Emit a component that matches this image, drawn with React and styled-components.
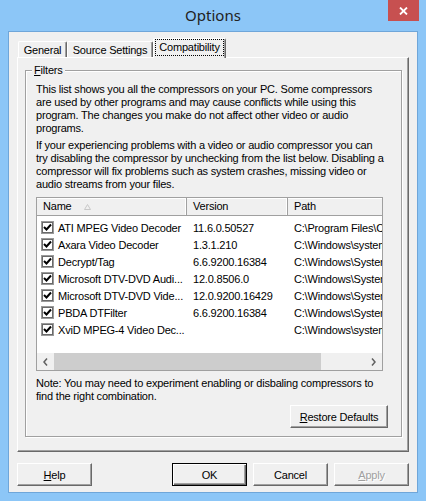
import React from 'react';
import styled, { createGlobalStyle } from 'styled-components';

const GlobalStyle = createGlobalStyle`
  html, body {
    margin: 0;
    padding: 0;
    background: #8cc6f7;
  }
  * {
    box-sizing: border-box;
  }
`;

const Window = styled.div`
  width: 426px;
  height: 501px;
  display: flex;
  flex-direction: column;
  background: #8cc6f7;
  font-family: "Liberation Sans", Arial, sans-serif;
  font-size: 11px;
  letter-spacing: -0.2px;
  color: #000;
`;

const TitleBar = styled.div`
  height: 31px;
  display: grid;
  grid-template-columns: 1fr auto 1fr;
`;

const Title = styled.div`
  grid-column: 2;
  font-family: "Noto Sans", "Open Sans", sans-serif;
  font-size: 15px;
  letter-spacing: 0;
  line-height: 30px;
  color: #222;
`;

const CloseButton = styled.div`
  justify-self: end;
  width: 31px;
  height: 21px;
  margin-right: 7px;
  background: #c75050;
  display: flex;
  align-items: center;
  justify-content: center;
`;

const Client = styled.div`
  flex: 1;
  margin: 0 8px 8px;
  background: #f0f0f0;
  border: 1px solid #6fa6d9;
  padding: 6px 8px 0;
  display: flex;
  flex-direction: column;
`;

const TabStrip = styled.div`
  display: flex;
  align-items: flex-end;
  height: 19px;
  padding-left: 1px;
`;

const Tab = styled.div`
  width: ${p => p.$w}px;
  height: ${p => (p.$active ? 20 : 16)}px;
  margin-bottom: ${p => (p.$active ? -1 : 0)}px;
  position: relative;
  z-index: ${p => (p.$active ? 1 : 0)};
  background: #f0f0f0;
  border-top: 1px solid #fff;
  border-left: 1px solid #fff;
  border-right: 1px solid #696969;
  box-shadow: inset -1px 0 #a0a0a0;
  border-radius: 2px 2px 0 0;
  display: flex;
  justify-content: center;
  align-items: ${p => (p.$active ? 'flex-start' : 'center')};
  padding-top: ${p => (p.$active ? 1 : 0)}px;
  white-space: nowrap;
`;

const FocusLabel = styled.span`
  outline: 1px dotted #000;
  outline-offset: 0;
  padding: 1px 3px;
  line-height: 13px;
`;

const Pane = styled.div`
  height: 395px;
  border-top: 1px solid #fff;
  border-left: 1px solid #fff;
  border-right: 1px solid #696969;
  border-bottom: 1px solid #696969;
  box-shadow: inset -1px -1px #a0a0a0;
  padding: 6px 6px 0 7px;
`;

const GroupBox = styled.fieldset`
  margin: 0;
  padding: 0;
  min-width: 0;
  border: 1px solid #a0a0a0;
  box-shadow: inset 1px 1px #fff, 1px 1px #fff;
`;

const Legend = styled.legend`
  margin-left: 6px;
  padding: 0 2px;
  line-height: 13px;
  background: #f0f0f0;
`;

const GroupContent = styled.div`
  display: flex;
  flex-direction: column;
  padding: 6px 13px 8px 10px;
`;

const Para = styled.p`
  margin: 0 0 ${p => p.$gap || 0}px;
  line-height: 13px;
  white-space: nowrap;
`;

const Key = styled.span`
  text-decoration: underline;
`;

const ListView = styled.div`
  width: 347px;
  height: 174px;
  margin-top: 2px;
  border: 1px solid #a0a0a0;
  background: #fff;
  display: flex;
  flex-direction: column;
  overflow: hidden;
`;

const Header = styled.div`
  display: flex;
  height: 18px;
  flex-shrink: 0;
  background: #f0f0f0;
  border-bottom: 1px solid #a0a0a0;
  box-shadow: inset 0 1px #fff;
`;

const HeaderCell = styled.div`
  width: ${p => p.$w}px;
  flex-shrink: 0;
  padding-left: 6px;
  line-height: 17px;
  border-right: 1px solid #a0a0a0;
  box-shadow: inset -1px 0 #fff;
  display: flex;
  align-items: center;
  gap: 12px;
`;

const Rows = styled.div`
  flex: 1;
  padding-top: 3px;
`;

const Row = styled.div`
  display: flex;
  height: 17px;
  align-items: center;
  white-space: nowrap;
`;

const NameCell = styled.div`
  width: 150px;
  flex-shrink: 0;
  padding-left: 4px;
  display: flex;
  align-items: center;
  gap: 4px;
`;

const Cell = styled.div`
  width: ${p => p.$w}px;
  flex-shrink: 0;
  padding-left: 6px;
`;

const CheckBox = styled.span`
  width: 13px;
  height: 13px;
  flex-shrink: 0;
  background: #fff;
  border: 1px solid #9a9a9a;
  box-shadow: inset 0 0 0 1px #6a6a6a;
  display: flex;
  align-items: center;
  justify-content: center;
`;

const ScrollBar = styled.div`
  height: 17px;
  flex-shrink: 0;
  display: flex;
  background: #f0f0f0;
`;

const ScrollArrow = styled.div`
  width: 17px;
  display: flex;
  align-items: center;
  justify-content: center;
`;

const ScrollTrack = styled.div`
  flex: 1;
  display: flex;
`;

const Thumb = styled.div`
  width: 267px;
  background: #cdcdcd;
`;

const Button = styled.div`
  width: ${p => p.$w || 75}px;
  height: 23px;
  background: #f0f0f0;
  border-top: 1px solid ${p => (p.$default ? '#000' : '#fff')};
  border-left: 1px solid ${p => (p.$default ? '#000' : '#fff')};
  border-right: 1px solid ${p => (p.$default ? '#000' : '#696969')};
  border-bottom: 1px solid ${p => (p.$default ? '#000' : '#696969')};
  box-shadow: ${p =>
    p.$default
      ? 'inset 1px 1px #fff, inset -1px -1px #696969, inset -2px -2px #a0a0a0'
      : 'inset -1px -1px #a0a0a0'};
  display: flex;
  align-items: center;
  justify-content: center;
  color: ${p => (p.$disabled ? '#a0a0a0' : '#000')};
  text-shadow: ${p => (p.$disabled ? '1px 1px #fff' : 'none')};
  white-space: nowrap;
`;

const RestoreButton = styled(Button)`
  align-self: flex-end;
  margin-top: 2px;
`;

const NotePara = styled(Para)`
  margin-top: 6px;
`;

const ButtonRow = styled.div`
  display: flex;
  gap: 6px;
  margin-top: 11px;
`;

const Spacer = styled.div`
  flex: 1;
`;

const Check = () => (
  <svg width="9" height="9" viewBox="0 0 9 9">
    <polyline points="1,4 3.5,6.5 8,1.5" fill="none" stroke="#000" strokeWidth="2" />
  </svg>
);

const compressors = [
  ['ATI MPEG Video Decoder', '11.6.0.50527', 'C:\\Program Files\\Common Files\\ATI'],
  ['Axara Video Decoder', '1.3.1.210', 'C:\\Windows\\system32\\axvd.ax'],
  ['Decrypt/Tag', '6.6.9200.16384', 'C:\\Windows\\System32\\encdec.dll'],
  ['Microsoft DTV-DVD Audi...', '12.0.8506.0', 'C:\\Windows\\System32\\msmpeg2adec.dll'],
  ['Microsoft DTV-DVD Vide...', '12.0.9200.16429', 'C:\\Windows\\System32\\msmpeg2vdec.dll'],
  ['PBDA DTFilter', '6.6.9200.16384', 'C:\\Windows\\System32\\PBDA.dll'],
  ['XviD MPEG-4 Video Dec...', '', 'C:\\Windows\\system32\\xvid.ax'],
];

const App = () => {
  return (
    <>
      <GlobalStyle />
      <Window>
        <TitleBar>
          <Title>Options</Title>
          <CloseButton>
            <svg width="9" height="8" viewBox="0 0 9 8">
              <path d="M1 0.5 L8 7.5 M8 0.5 L1 7.5" stroke="#fff" strokeWidth="1.8" />
            </svg>
          </CloseButton>
        </TitleBar>
        <Client>
          <TabStrip>
            <Tab $w={49}>General</Tab>
            <Tab $w={86}>Source Settings</Tab>
            <Tab $w={73} $active>
              <FocusLabel>Compatibility</FocusLabel>
            </Tab>
          </TabStrip>
          <Pane>
            <GroupBox>
              <Legend><Key>F</Key>ilters</Legend>
              <GroupContent>
                <Para $gap={4}>
                  This list shows you all the compressors on your PC. Some compressors<br />
                  are used by other programs and may cause conflicts while using this<br />
                  program. The changes you make do not affect other video or audio<br />
                  programs.
                </Para>
                <Para $gap={4}>
                  If your experiencing problems with a video or audio compressor you can<br />
                  try disabling the compressor by unchecking from the list below. Disabling a<br />
                  compressor will fix problems such as system crashes, missing video or<br />
                  audio streams from your files.
                </Para>
                <ListView>
                  <Header>
                    <HeaderCell $w={150}>
                      Name
                      <svg width="7" height="6" viewBox="0 0 7 6">
                        <path d="M3.5 0.5 L6.5 5.5 L0.5 5.5 Z" fill="none" stroke="#c8c8c8" />
                      </svg>
                    </HeaderCell>
                    <HeaderCell $w={101}>Version</HeaderCell>
                    <HeaderCell $w={120}>Path</HeaderCell>
                  </Header>
                  <Rows>
                    {compressors.map(([name, version, path]) => (
                      <Row key={name}>
                        <NameCell>
                          <CheckBox><Check /></CheckBox>
                          {name}
                        </NameCell>
                        <Cell $w={101}>{version}</Cell>
                        <Cell $w={200}>{path}</Cell>
                      </Row>
                    ))}
                  </Rows>
                  <ScrollBar>
                    <ScrollArrow>
                      <svg width="5" height="8" viewBox="0 0 5 8">
                        <path d="M4 0.5 L1 4 L4 7.5" fill="none" stroke="#606060" strokeWidth="1.5" />
                      </svg>
                    </ScrollArrow>
                    <ScrollTrack>
                      <Thumb />
                    </ScrollTrack>
                    <ScrollArrow>
                      <svg width="5" height="8" viewBox="0 0 5 8">
                        <path d="M1 0.5 L4 4 L1 7.5" fill="none" stroke="#606060" strokeWidth="1.5" />
                      </svg>
                    </ScrollArrow>
                  </ScrollBar>
                </ListView>
                <NotePara>
                  Note: You may need to experiment enabling or disbaling compressors to<br />
                  find the right combination.
                </NotePara>
                <RestoreButton $w={98}>
                  <span><Key>R</Key>estore Defaults</span>
                </RestoreButton>
              </GroupContent>
            </GroupBox>
          </Pane>
          <ButtonRow>
            <Button><span><Key>H</Key>elp</span></Button>
            <Spacer />
            <Button $default>OK</Button>
            <Button>Cancel</Button>
            <Button $disabled><span><Key>A</Key>pply</span></Button>
          </ButtonRow>
        </Client>
      </Window>
    </>
  );
};

export default App;
